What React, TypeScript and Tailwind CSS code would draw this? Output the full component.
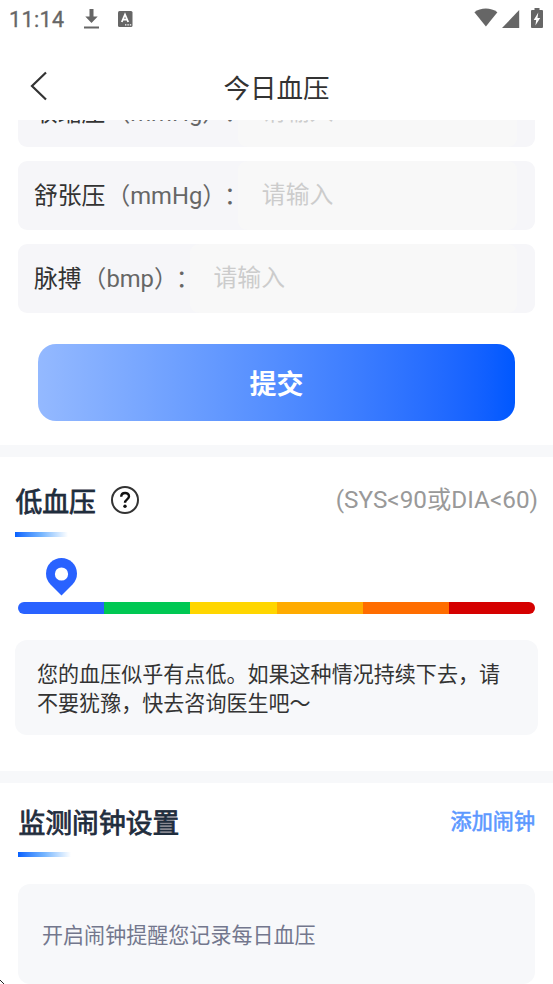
import type { ReactNode } from 'react';

const fields = [
  { name: '收缩压', unit: '（mmHg）' },
  { name: '舒张压', unit: '（mmHg）' },
  { name: '脉搏', unit: '（bmp）' },
];

const levels = ['bg-[#2962ff]', 'bg-[#00c853]', 'bg-[#ffd600]', 'bg-[#ffab00]', 'bg-[#ff6d00]', 'bg-[#d50000]'];

function StatusBar() {
  return (
    <div className="flex h-[38px] items-center justify-between pl-[9px] pr-[9px] text-[#666]">
      <div className="flex items-center">
        <span className="w-[55px] whitespace-nowrap pt-px text-[21.5px] leading-none tracking-[0.4px] [-webkit-text-stroke:0.3px]">
          11:14
        </span>
        <svg className="ml-[19px]" width="17" height="22" viewBox="0 0 17 22" fill="currentColor">
          <path d="M6.500 1h4v7.500h4.200L8.500 15 2.300 8.500h4.200zM1 18.500h15v2H1z" />
        </svg>
        <svg className="mb-px ml-[18px]" width="15" height="16" viewBox="0 0 15 16">
          <rect width="14.500" height="16" rx="1.500" fill="#666" />
          <path d="M3.800 11 7 3.500 10.200 11M5 8.600h4" fill="none" stroke="#fff" strokeWidth="1.800" />
          <path d="M7 13.200h1.400v1.400H7zM9.400 13.200h1.400v1.400H9.400zM11.800 13.200h1.400v1.400h-1.400z" fill="#fff" />
        </svg>
      </div>
      <div className="flex items-center">
        <svg className="mb-[3px]" width="24" height="19" viewBox="0 0 24 19" fill="currentColor">
          <path d="M0.400 4.200C6.500-0.600 17-0.600 23.400 4.200L11.900 18.600z" />
        </svg>
        <svg className="ml-1 mb-[1px]" width="18" height="19" viewBox="0 0 18 19" fill="currentColor">
          <path d="M17.200 1v18H0z" />
        </svg>
        <svg className="ml-[11px] mr-px mb-[2px]" width="12" height="20" viewBox="0 0 12 20">
          <path d="M3.500 0h5v2H11q1 0 1 1v16q0 1-1 1H1q-1 0-1-1V3q0-1 1-1h2.500z" fill="#666" />
          <path d="M7.300 4.500 2.700 12h2.500l-.8 5.500L9.200 10H6.500z" fill="#fff" />
        </svg>
      </div>
    </div>
  );
}

function Header() {
  return (
    <header className="grid h-[82px] grid-cols-[1fr_auto_1fr] items-center pt-3.5">
      <svg className="ml-[30px]" width="18" height="30" viewBox="0 0 18 30" fill="none" stroke="#333" strokeWidth="2.200">
        <path d="M16 1.500 2 15l14 13.500" />
      </svg>
      <h1 className="pt-1.5 text-[26.5px] leading-8 text-[#333]">今日血压</h1>
    </header>
  );
}

function Field({ name, unit }: { name: string; unit: string }) {
  return (
    <div className="mx-[18px] flex h-[69px] shrink-0 items-center rounded-[9px] bg-[#f6f6f9] pl-4 pr-[18px]">
      <span className="whitespace-nowrap pt-0.5 text-[23.8px] text-[#666] [text-spacing-trim:space-all]">
        <span className="mr-px text-[#333]">{name}</span>
        {unit}
        <span className="-ml-[2px]">：</span>
      </span>
      <div className="-ml-[10px] flex h-full flex-1 items-center rounded-[9px] bg-[#f8f8f8] pl-6 text-[23.8px] text-[#ccc]">
        请输入
      </div>
    </div>
  );
}

function SectionTitle({ children }: { children: ReactNode }) {
  return (
    <h2 className="pl-[0.5px] pt-[3px] text-[26.8px] leading-10 text-[#1f2d3d] [-webkit-text-stroke:0.8px]">{children}</h2>
  );
}

function Underline() {
  return <div className="h-[5px] w-[53px] bg-linear-to-r from-[#0560ff] via-[#75b5ff] to-white" />;
}

function HelpIcon() {
  return (
    <svg width="28" height="28" viewBox="0 0 28 28" fill="none" stroke="#333">
      <circle cx="14" cy="14" r="13" strokeWidth="2" />
      <path d="M10.200 10.800C10.200 5.700 18 5.700 18 10.500c0 2.700-4 3-4 6.200" stroke="#111" strokeWidth="2.400" />
      <circle cx="14" cy="20.200" r="1.700" fill="#111" stroke="none" />
    </svg>
  );
}

export default function App() {
  return (
    <div className="relative h-[984px] w-[553px] overflow-hidden bg-white font-['Roboto','Noto_Sans_CJK_SC',sans-serif]">
      <StatusBar />
      <Header />

      {/* The first field is partly scrolled under the header */}
      <section className="flex h-[193px] flex-col justify-end gap-3.5 overflow-hidden">
        {fields.map((field) => (
          <Field key={field.name} {...field} />
        ))}
      </section>

      <div className="px-[38px] pb-6 pt-[31px]">
        <button className="h-[77px] w-full rounded-[18px] bg-linear-to-r from-[#94b9ff] to-[#0058ff] pt-1.5 text-[27px] font-bold text-white">
          提交
        </button>
      </div>

      <div className="h-3 bg-[#f7f8fa]" />

      <section className="h-[314px] px-[15px] pt-6">
        <div className="flex h-10 items-center">
          <SectionTitle>低血压</SectionTitle>
          <div className="mb-[3px] ml-[15px]">
            <HelpIcon />
          </div>
          <span className="mb-0.5 ml-auto text-[24.3px] text-[#999]">{'(SYS<90或DIA<60)'}</span>
        </div>
        <div className="mt-[11px]">
          <Underline />
        </div>
        <svg className="ml-[31px] mt-[21px]" width="31" height="38" viewBox="0 0 31 38">
          <path d="M15.500 37.500 4.500 26.500A15.500 15.500 0 1 1 26.500 26.500z" fill="#2962ff" />
          <circle cx="15.500" cy="16" r="6.600" fill="#fff" />
        </svg>
        <div className="mx-[3px] mt-[6px] flex h-3 overflow-hidden rounded-full">
          {levels.map((color) => (
            <div key={color} className={`flex-1 ${color}`} />
          ))}
        </div>
        <p className="mt-[26px] h-[95px] rounded-xl bg-[#f7f8fa] pl-[22px] pr-8 pt-5 text-[21.05px] leading-[29.3px] text-[#333]">
          您的血压似乎有点低。如果这种情况持续下去，请不要犹豫，快去咨询医生吧～
        </p>
      </section>

      <div className="h-3 bg-[#f7f8fa]" />

      <section className="px-[18px] pt-[19px]">
        <div className="flex h-10 items-center justify-between">
          <SectionTitle>监测闹钟设置</SectionTitle>
          <button className="text-[21.1px] text-[#5c98ff] [-webkit-text-stroke:0.6px]">添加闹钟</button>
        </div>
        <div className="mt-[10px]">
          <Underline />
        </div>
        <div className="mt-[27px] flex h-[100px] items-center rounded-xl bg-[#f7f8fa] pl-6 pt-[3px] text-[21.05px] text-[#73778d]">
          开启闹钟提醒您记录每日血压
        </div>
      </section>

      {/* Pointer tip at the lower left edge */}
      <svg className="absolute bottom-0 left-0" width="4" height="4" viewBox="0 0 4 4">
        <path d="M0 0h1v1H0zM1 1h1v1H1zM2 2h1v1H2zM3 3h1v1H3z" fill="#222" />
      </svg>
    </div>
  );
}
